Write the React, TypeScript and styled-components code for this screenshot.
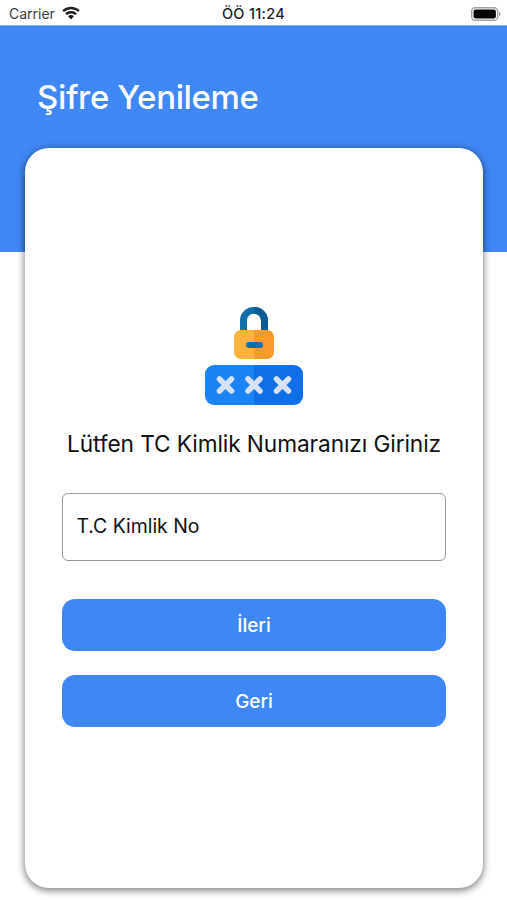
import styled, { createGlobalStyle } from 'styled-components';

const GlobalStyle = createGlobalStyle`
  html, body {
    margin: 0;
    padding: 0;
    background: #ffffff;
  }
  * {
    box-sizing: border-box;
  }
  body {
    font-family: Inter, "Liberation Sans", sans-serif;
  }
`;

const Screen = styled.div`
  width: 507px;
  height: 900px;
  overflow: hidden;
  display: flex;
  flex-direction: column;
  background: #ffffff;
`;

const StatusBar = styled.div`
  height: 25px;
  padding: 2px 6px 0 9px;
  display: grid;
  grid-template-columns: 1fr auto 1fr;
  align-items: center;
  color: #1c1c1e;
  font-size: 14px;
`;

const Carrier = styled.div`
  display: flex;
  align-items: center;
  gap: 6px;
  color: #3a3a3c;
`;

const Clock = styled.div`
  margin-right: 3px;
  font-size: 14.5px;
  font-weight: 500;
  letter-spacing: 0.3px;
`;

const BatterySlot = styled.div`
  display: flex;
  justify-content: flex-end;
`;

const Header = styled.header`
  height: 227px;
  flex-shrink: 0;
  border-top: 1px solid #7fb0f8;
  padding: 52px 37px 0;
  background: #3f87f5;
`;

const Title = styled.h1`
  margin: 0;
  color: #ffffff;
  font-size: 33px;
  line-height: 38px;
  font-weight: 500;
  letter-spacing: -0.35px;
`;

const Card = styled.main`
  width: 458px;
  height: 740px;
  margin: -104px 0 0 25px;
  flex-shrink: 0;
  padding: 159px 37px 0;
  display: flex;
  flex-direction: column;
  align-items: center;
  background: #ffffff;
  border-radius: 24px;
  box-shadow: 0 2px 7px 1px rgba(0, 0, 0, 0.48);
`;

const Prompt = styled.p`
  margin: 24px 0 0;
  color: #111111;
  font-size: 22.7px;
  line-height: 30px;
  white-space: nowrap;
  letter-spacing: -0.1px;
`;

const Field = styled.input`
  width: 384px;
  height: 68px;
  margin-top: 34px;
  padding: 0 13.5px 2px;
  border: 1.5px solid #999999;
  border-radius: 6px;
  background: #ffffff;
  color: #111111;
  font: inherit;
  font-size: 19.4px;
  outline: none;

  &::placeholder {
    color: #111111;
    opacity: 1;
  }
`;

const Actions = styled.div`
  width: 384px;
  margin-top: 38px;
  display: flex;
  flex-direction: column;
  gap: 24px;
`;

const ActionButton = styled.button`
  height: 52px;
  padding: 0;
  border: none;
  border-radius: 13px;
  background: #3f87f5;
  color: #ffffff;
  font: inherit;
  font-size: 19px;
  font-weight: 500;
  cursor: pointer;
`;

const WifiIcon = () => (
  <svg width="20" height="15" viewBox="0 0 20 15" fill="#1c1c1e" aria-hidden="true">
    <path d="M10 3.2c2.7 0 5.2 1 7.100 2.800l1.600-1.800A12.700 12.700 0 0 0 10 .7 12.700 12.700 0 0 0 1.300 4.200L2.900 6A10.300 10.300 0 0 1 10 3.200Z" />
    <path d="M10 7.400c1.600 0 3.100.6 4.200 1.700l1.700-1.800A8.500 8.500 0 0 0 10 4.900a8.500 8.500 0 0 0-5.900 2.400l1.700 1.800A6 6 0 0 1 10 7.400Z" />
    <path d="M10 9.100c-1.100 0-2.100.4-2.900 1.100L10 13.400l2.900-3.200A4.300 4.300 0 0 0 10 9.100Z" />
  </svg>
);

const BatteryIcon = () => (
  <svg width="30" height="14" viewBox="0 0 30 14" aria-hidden="true">
    <rect x="0.700" y="0.700" width="26" height="12.600" rx="3.600" fill="none" stroke="#a3a3a3" strokeWidth="1.400" />
    <rect x="2.500" y="2.500" width="22.400" height="9" rx="2.200" fill="#050505" />
    <path d="M28 4.800c1 .3 1.600 1.100 1.600 2.200s-.6 1.900-1.600 2.200Z" fill="#a3a3a3" />
  </svg>
);

const LockIcon = () => (
  <svg width="98" height="98" viewBox="0 0 98 98" aria-hidden="true">
    <path d="M35 26V14C35 5.800 41 0 49 0s14 5.800 14 14v12h-7V14c-0-4.300-2.800-7.300-7-7.300S42 9.700 42 14v12Z" fill="#0f6da8" />
    <path d="M49 0c8 0 14 5.800 14 14v12h-7V14c0-4.300-2.800-7.300-7-7.300Z" fill="#0b5c94" />
    <path d="M36 23h13v29H36a7 7 0 0 1-7-7V30a7 7 0 0 1 7-7Z" fill="#ffb13d" />
    <path d="M49 23h13a7 7 0 0 1 7 7v15a7 7 0 0 1-7 7H49Z" fill="#fc9a2c" />
    <rect x="41" y="35" width="17" height="6" rx="3" fill="#0f6da8" />
    <path d="M9 58h40v40H9a9 9 0 0 1-9-9V67a9 9 0 0 1 9-9Z" fill="#1b84f5" />
    <path d="M49 58h40a9 9 0 0 1 9 9v22a9 9 0 0 1-9 9H49Z" fill="#0f6fe6" />
    <g stroke="#d9e1f7" strokeWidth="5.500" strokeLinecap="round">
      <path d="M14.500 72l12 12M26.500 72L14.500 84" />
      <path d="M43 72l12 12M55 72L43 84" />
      <path d="M71.500 72l12 12M83.500 72L71.500 84" />
    </g>
  </svg>
);

export default function App() {
  return (
    <>
      <GlobalStyle />
      <Screen>
        <StatusBar>
          <Carrier>
            Carrier
            <WifiIcon />
          </Carrier>
          <Clock>ÖÖ 11:24</Clock>
          <BatterySlot>
            <BatteryIcon />
          </BatterySlot>
        </StatusBar>
        <Header>
          <Title>Şifre Yenileme</Title>
        </Header>
        <Card>
          <LockIcon />
          <Prompt>Lütfen TC Kimlik Numaranızı Giriniz</Prompt>
          <Field placeholder="T.C Kimlik No" />
          <Actions>
            <ActionButton>İleri</ActionButton>
            <ActionButton>Geri</ActionButton>
          </Actions>
        </Card>
      </Screen>
    </>
  );
}
